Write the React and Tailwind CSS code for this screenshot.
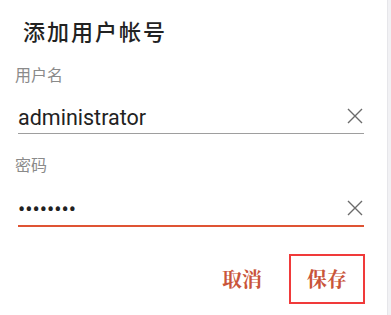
import React, { useState } from 'react';

const ClearIcon = ({ onClick, className = '' }) => (
  <button type="button" onClick={onClick} className={`w-[18px] h-[18px] flex items-center justify-center text-[#6b6b6b] ${className}`}>
    <svg width="16" height="16" viewBox="0 0 16 16" fill="none" stroke="currentColor" strokeWidth="1.4">
      <path d="M1 1 L15 15 M15 1 L1 15" />
    </svg>
  </button>
);

const App = () => {
  const [username, setUsername] = useState('administrator');
  const [password, setPassword] = useState('12345678');

  return (
    <div className="flex w-[391px] h-[315px] bg-white" style={{ fontFamily: 'Roboto, "Noto Sans CJK SC", sans-serif' }}>
      <div className="w-[387px] flex flex-col pl-[18px] pr-[23px]">
        {/* Title */}
        <h1 className="mt-[19px] ml-[5px] h-[28px] text-[22px] leading-[28px] tracking-[2px] font-medium text-[#222]">添加用户帐号</h1>

        {/* Username */}
        <label className="mt-[19px] -ml-[3px] h-[20px] text-[16px] leading-[20px] text-[#8a8a8a]">用户名</label>
        <div className="mt-[20px] flex items-center border-b border-[#9e9e9e] pb-[3px]">
          <input
            value={username}
            onChange={(e) => setUsername(e.target.value)}
            className="flex-1 min-w-0 h-[24px] outline-none text-[21.5px] leading-[24px] text-[#222] bg-transparent"
          />
          <ClearIcon onClick={() => setUsername('')} className="-mt-[4px]" />
        </div>

        {/* Password */}
        <label className="mt-[22px] -ml-[3px] h-[20px] text-[16px] leading-[20px] text-[#8a8a8a]">密码</label>
        <div className="mt-[22px] flex items-center border-b-2 border-[#df5434] pb-[3px]">
          <input
            type="password"
            value={password}
            onChange={(e) => setPassword(e.target.value)}
            className="flex-1 min-w-0 h-[24px] outline-none text-[21.5px] leading-[24px] text-[#222] bg-transparent"
          />
          <ClearIcon onClick={() => setPassword('')} className="-mt-[4px]" />
        </div>

        {/* Actions */}
        <div className="mt-[27px] flex justify-end items-center" style={{ fontFamily: '"Noto Serif CJK SC", "Noto Serif SC", "Liberation Serif", serif' }}>
          <button className="px-[10px] h-[50px] text-[20px] font-bold text-[#c9553a] mr-[17px]">取消</button>
          <button className="w-[76px] h-[50px] border-2 border-[#f03a3a] text-[20px] font-bold text-[#c9553a] -mr-[1px]">保存</button>
        </div>
      </div>
      <div className="w-[4px] bg-[#f1f1f4] border-l border-[#e6e6ea]" />
    </div>
  );
};

export default App;
